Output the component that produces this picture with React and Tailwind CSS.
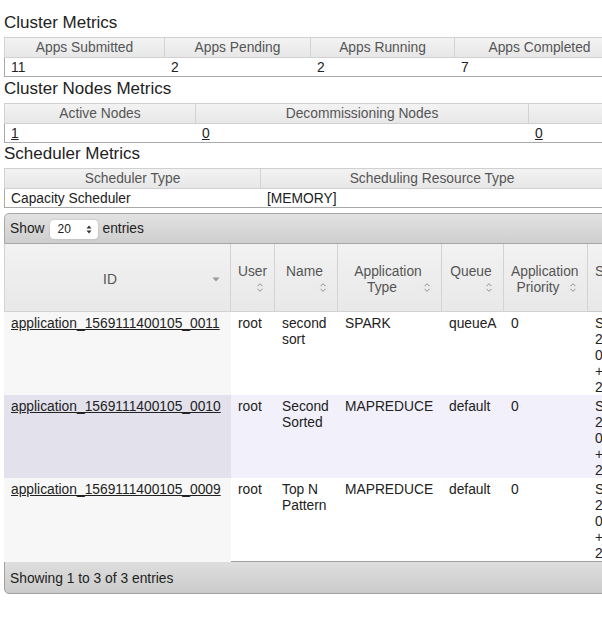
import React from "react";

const SortBoth = () => (
  <svg width="8" height="11" viewBox="0 0 8 11" fill="none" stroke="#8f8f8f" strokeWidth="1">
    <path d="M1.5 4.2 L4 1.7 L6.5 4.2 M1.5 6.8 L4 9.3 L6.5 6.8" />
  </svg>
);

const SortDesc = () => (
  <svg width="8" height="5" viewBox="0 0 8 5">
    <path d="M0.5 0.5 H7.5 L4 4.5Z" fill="#9a9a9a" />
  </svg>
);

function MetricsTable({ cols, heads, vals, link }) {
  return (
    <div className="w-[900px]">
      <div className={`grid ${cols} border-t border-b border-[#d0d0d0]`}>
        {heads.map((h, i) => (
          <div
            key={i}
            className="h-[19px] flex items-center justify-center pt-[2px] border-l border-[#d3d3d3] bg-linear-to-b from-[#f3f3f3] to-[#e7e7e7] text-[#555] whitespace-nowrap overflow-hidden"
          >
            {h}
          </div>
        ))}
      </div>
      <div className={`grid ${cols} border-b border-l border-[#a9a9a9]`}>
        {vals.map((v, i) => (
          <div key={i} className="h-[18px] flex items-center pt-[3px] pl-[6px] text-[#222] whitespace-nowrap">
            {link ? <span className="underline">{v}</span> : v}
          </div>
        ))}
      </div>
    </div>
  );
}

function Th({ kind, l1, l2, last }) {
  const base = `h-[68px] flex flex-col justify-center pt-[4px] pl-[7px] pr-[10px] border-b border-[#cacaca] text-[#555] leading-[16px] ${last ? "" : "border-r border-[#d3d3d3]"}`;
  if (kind === "id") {
    return (
      <div className={`${base} border-l border-[#cccccc]`}>
        <div className="flex items-center">
          <span className="flex-1 text-center">{l1}</span>
          <span className="ml-[4px] w-[8px] flex items-center">
            <SortDesc />
          </span>
        </div>
      </div>
    );
  }
  if (kind === "below") {
    return (
      <div className={base}>
        <div className="text-center whitespace-nowrap">{l1}</div>
        <div className="flex justify-end h-[16px] items-center">
          <span className="w-[8px] flex">
            <SortBoth />
          </span>
        </div>
      </div>
    );
  }
  if (kind === "two") {
    return (
      <div className={base}>
        <div className="text-center whitespace-nowrap">{l1}</div>
        <div className="flex items-center">
          <span className="flex-1 text-center">{l2}</span>
          <span className="ml-[4px] w-[8px] flex">
            <SortBoth />
          </span>
        </div>
      </div>
    );
  }
  return (
    <div className={`${base} items-start`}>
      <div className="whitespace-nowrap">{l1}</div>
      <div className="h-[16px]"></div>
    </div>
  );
}

const rows = [
  {
    id: "application_1569111400105_0011",
    user: "root",
    name: ["second", "sort"],
    type: "SPARK",
    queue: "queueA",
    prio: "0",
    start: ["Sun Sep", "22", "09:21:13", "+0800", "2019"],
    even: false,
  },
  {
    id: "application_1569111400105_0010",
    user: "root",
    name: ["Second", "Sorted"],
    type: "MAPREDUCE",
    queue: "default",
    prio: "0",
    start: ["Sun Sep", "22", "08:40:02", "+0800", "2019"],
    even: true,
  },
  {
    id: "application_1569111400105_0009",
    user: "root",
    name: ["Top N", "Pattern"],
    type: "MAPREDUCE",
    queue: "default",
    prio: "0",
    start: ["Sun Sep", "22", "08:12:45", "+0800", "2019"],
    even: false,
  },
];

const GRID = "grid grid-cols-[227px_44px_63px_104px_62px_84px_100px]";

export default function App() {
  return (
    <div className="w-[602px] h-[621px] overflow-hidden bg-white pl-[4px] font-['Liberation_Sans',Arial,sans-serif] text-[13.8px] text-[#222]">
      <h2 className="pt-[13px] pb-[4px] text-[17px] leading-[20px] font-normal text-[#222] whitespace-nowrap">
        Cluster Metrics
      </h2>
      <MetricsTable
        cols="grid-cols-[160px_146px_144px_170px_240px]"
        heads={["Apps Submitted", "Apps Pending", "Apps Running", "Apps Completed", "Containers Running"]}
        vals={["11", "2", "2", "7", "0"]}
      />
      <h2 className="mt-[2px] mb-[4px] text-[17px] leading-[20px] font-normal text-[#222] whitespace-nowrap">
        Cluster Nodes Metrics
      </h2>
      <MetricsTable
        cols="grid-cols-[191px_333px_330px]"
        heads={["Active Nodes", "Decommissioning Nodes", "Decommissioned Nodes"]}
        vals={["1", "0", "0"]}
        link
      />
      <h2 className="mt-[1px] mb-[4px] text-[17px] leading-[20px] font-normal text-[#222] whitespace-nowrap">
        Scheduler Metrics
      </h2>
      <MetricsTable
        cols="grid-cols-[256px_343px_260px]"
        heads={["Scheduler Type", "Scheduling Resource Type", "Minimum Allocation"]}
        vals={["Capacity Scheduler", "[MEMORY]", "<memory:1024, vCores:1>"]}
      />

      <div className="mt-[5px] w-[760px]">
        <div className="h-[31px] flex items-center pt-[1px] border border-[#a8a8a8] rounded-tl-[5px] bg-linear-to-b from-[#e2e2e2] to-[#cecece] pl-[5px] text-[#222]">
          <span>Show</span>
          <div className="ml-[5px] flex items-center w-[48px] h-[19px] bg-white rounded-[4px] shadow-[0_0_2px_rgba(0,0,0,0.2)] pl-[8px] pr-[6px] text-[12px]">
            <span className="flex-1">20</span>
            <svg width="6" height="9" viewBox="0 0 6 9">
              <path d="M0.5 3.5 L3 0.5 L5.5 3.5Z M0.5 5.5 L3 8.5 L5.5 5.5Z" fill="#333" />
            </svg>
          </div>
          <span className="ml-[5px]">entries</span>
        </div>

        <div className={`${GRID} bg-linear-to-b from-[#f2f2f2] to-[#e8e8e8]`}>
          <Th kind="id" l1="ID" />
          <Th kind="below" l1="User" />
          <Th kind="below" l1="Name" />
          <Th kind="two" l1="Application" l2="Type" />
          <Th kind="below" l1="Queue" />
          <Th kind="two" l1="Application" l2="Priority" />
          <Th kind="plain" l1="StartTime" last />
        </div>

        {rows.map((r, i) => (
          <div key={i} className={`${GRID} h-[83px] leading-[16px] ${r.even ? "bg-[#f2f1fb]" : "bg-white"}`}>
            <div className={`pt-[4px] px-[7px] whitespace-nowrap ${r.even ? "bg-[#e2e1ec]" : "bg-[#f7f7f7]"}`}>
              <span className="underline">{r.id}</span>
            </div>
            <div className="pt-[4px] px-[7px]">{r.user}</div>
            <div className="pt-[4px] px-[7px] whitespace-nowrap">
              <div>{r.name[0]}</div>
              <div>{r.name[1]}</div>
            </div>
            <div className="pt-[4px] px-[7px]">{r.type}</div>
            <div className="pt-[4px] px-[7px]">{r.queue}</div>
            <div className="pt-[4px] px-[7px]">{r.prio}</div>
            <div className="pt-[4px] px-[7px] whitespace-nowrap">
              {r.start.map((s, j) => (
                <div key={j}>{s}</div>
              ))}
            </div>
          </div>
        ))}

        <div className="h-[33px] flex items-center pt-[3px] border border-[#a0a0a0] rounded-bl-[5px] bg-linear-to-b from-[#dedede] to-[#cbcbcb] pl-[5px] text-[#222]">
          Showing 1 to 3 of 3 entries
        </div>
      </div>
    </div>
  );
}
